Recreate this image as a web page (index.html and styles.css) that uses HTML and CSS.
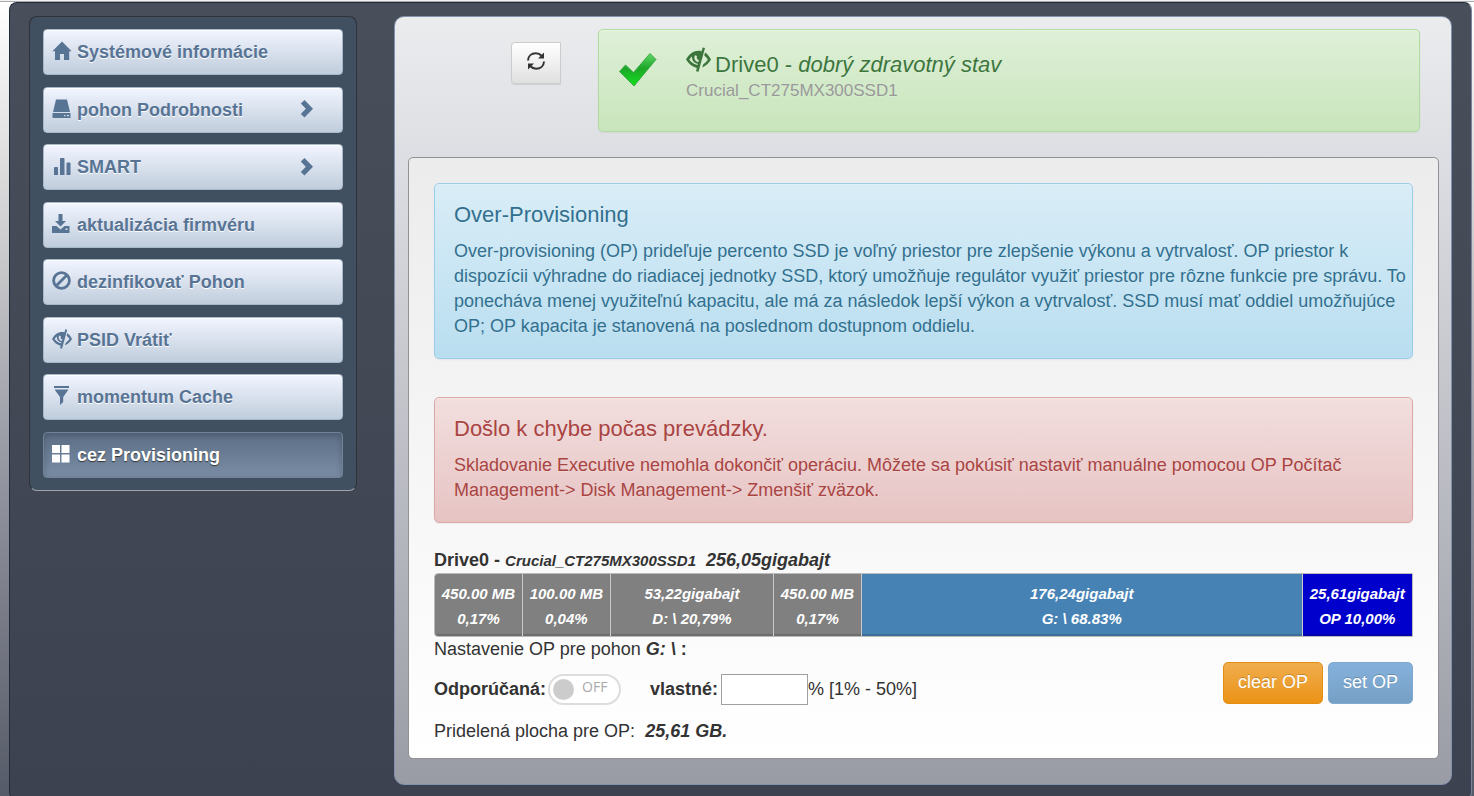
FILE: index.html
```
<!DOCTYPE html>
<html lang="sk">
<head>
    <meta charset="UTF-8">
    <meta name="viewport" content="width=device-width, initial-scale=1.0">
    <title>Over-Provisioning</title>
    <link rel="stylesheet" href="styles.css">
</head>
<body>
    <svg class="sprite" aria-hidden="true">
        <symbol id="eye-close" viewBox="0 0 20 20">
            <path fill-rule="evenodd" d="M0 10C2.500 5.500 6 3 10 3c1 0 1.800.1 2.500.3L13.300.3l1.900.5L10 19.700l-2-.4.700-2.600C5 16 2.200 13.600 0 10zM2.600 10c1.600 2.300 3.800 3.800 6.600 4.300l.3-1C6.500 12.800 4.600 10.800 4.800 7.500 3.900 8.200 3.200 9 2.600 10zM7.300 6.500C5.900 8.600 7 11.500 9.900 12l.4-1.500C8.800 10 8.200 8.600 8.800 7.200z"/>
            <path d="M15.200 4.300c2 1.200 3.600 3.200 4.800 5.700-1.600 2.800-4 5-7 6.300l.8-2.600c1.500-.9 2.700-2.100 3.700-3.700-.7-1.300-1.700-2.400-2.900-3.300z"/>
        </symbol>
    </svg>

    <div class="shell">
        <nav class="sidebar">
            <a href="#" class="nav-btn">
                <svg class="icon" viewBox="0 0 20 20"><path d="M10 .5l9.700 9.800h-2.500V19H12v-6H8v6H3v-8.700H.3z"/></svg>
                <span>Systémové informácie</span>
            </a>
            <a href="#" class="nav-btn">
                <svg class="icon" viewBox="0 0 20 20"><path fill-rule="evenodd" d="M4 .5h11l3 12.500H1zM.5 14h18v5H.5zM12 16v1.300h1.500V16zM15 16v1.300h2V16z"/></svg>
                <span>pohon Podrobnosti</span>
                <svg class="chevron" viewBox="0 0 14 18"><path d="M4.500 0L13 8.800 4.500 17.600.8 14l5-5.200-5-5.200z"/></svg>
            </a>
            <a href="#" class="nav-btn">
                <svg class="icon" viewBox="0 0 20 20"><path d="M2 12q0-1 1-1h2q1 0 1 1v7H2zM8 3q0-1 1-1h2.500q1 0 1 1v16H8zM14.500 7.500q0-1 1-1h2q1 0 1 1V19h-4z"/></svg>
                <span>SMART</span>
                <svg class="chevron" viewBox="0 0 14 18"><path d="M4.500 0L13 8.800 4.500 17.600.8 14l5-5.200-5-5.200z"/></svg>
            </a>
            <a href="#" class="nav-btn">
                <svg class="icon" viewBox="0 0 20 20"><path fill-rule="evenodd" d="M6.500 0h4v7H14l-5.500 5.500L3 7h3.500zM0 12h4.500l4 3.500 4-3.500h5v7H0zM13.500 14.500V16h2v-1.500z"/></svg>
                <span>aktualizácia firmvéru</span>
            </a>
            <a href="#" class="nav-btn">
                <svg class="icon" viewBox="0 0 20 20"><g fill="none" stroke="currentColor" stroke-width="2.800"><circle cx="9.500" cy="9.500" r="7.900"/><path d="M4 15L15 4"/></g></svg>
                <span>dezinfikovať Pohon</span>
            </a>
            <a href="#" class="nav-btn">
                <svg class="icon"><use href="#eye-close"/></svg>
                <span>PSID Vrátiť</span>
            </a>
            <a href="#" class="nav-btn">
                <svg class="icon" viewBox="0 0 20 20"><path d="M2 0h15v2H2zM2.500 3.500h14l-5.300 7.500v5L8 19v-8z"/></svg>
                <span>momentum Cache</span>
            </a>
            <a href="#" class="nav-btn active">
                <svg class="icon" viewBox="0 0 20 20"><path d="M0 1h8v8H0zM9.500 1h8v8h-8zM0 10.500h8v8H0zM9.500 10.500h8v8h-8z"/></svg>
                <span>cez Provisioning</span>
            </a>
        </nav>

        <main class="main">
            <header class="drive-header">
                <button type="button" class="btn-refresh" aria-label="Obnoviť">
                    <svg viewBox="0 0 20 20"><g fill="none" stroke="#333" stroke-width="2"><path d="M2 9.500C2.200 5 5.500 2.300 9.800 2.300c2.500 0 4.500 1 6 2.700"/><path d="M18 10.500c-.2 4.500-3.500 7.200-7.800 7.200-2.500 0-4.500-1-6-2.700"/></g><path fill="#333" d="M18 1.500v6h-6zM2 18.500v-6h6z"/></svg>
                </button>
                <div class="alert alert-success">
                    <svg class="check" viewBox="0 0 40 36">
                        <defs><linearGradient id="tick" x1="0" y1="0" x2="0" y2="1"><stop offset="0" stop-color="#5fd866"/><stop offset=".45" stop-color="#1ea62a"/><stop offset="1" stop-color="#12e01c"/></linearGradient></defs>
                        <path fill="url(#tick)" stroke="#3da845" stroke-width="1" d="M1.500 19.500L7.500 13l8 7.500L32 1.500l6 6L16 34z"/>
                    </svg>
                    <div>
                        <h2 class="drive-title"><svg class="eye"><use href="#eye-close"/></svg> Drive0 - <em>dobrý zdravotný stav</em></h2>
                        <div class="drive-model">Crucial_CT275MX300SSD1</div>
                    </div>
                </div>
            </header>

            <section class="content">
                <div class="alert alert-info">
                    <h3>Over-Provisioning</h3>
                    <p>Over-provisioning (OP) prideľuje percento SSD je voľný priestor pre zlepšenie výkonu a vytrvalosť. OP priestor k dispozícii výhradne do riadiacej jednotky SSD, ktorý umožňuje regulátor využiť priestor pre rôzne funkcie pre správu. To ponecháva menej využiteľnú kapacitu, ale má za následok lepší výkon a vytrvalosť. SSD musí mať oddiel umožňujúce OP; OP kapacita je stanovená na poslednom dostupnom oddielu.</p>
                </div>

                <div class="alert alert-danger">
                    <h3>Došlo k chybe počas prevádzky.</h3>
                    <p>Skladovanie Executive nemohla dokončiť operáciu. Môžete sa pokúsiť nastaviť manuálne pomocou OP Počítač Management-&gt; Disk Management-&gt; Zmenšiť zväzok.</p>
                </div>

                <div class="drive-label">Drive0 - <em><small>Crucial_CT275MX300SSD1</small>&nbsp; 256,05gigabajt</em></div>
                <div class="partitions">
                    <div class="part" style="width: 9%">450.00 MB<br>0,17%</div>
                    <div class="part" style="width: 9%">100.00 MB<br>0,04%</div>
                    <div class="part" style="width: 16.700%">53,22gigabajt<br>D: \ 20,79%</div>
                    <div class="part" style="width: 9%">450.00 MB<br>0,17%</div>
                    <div class="part selected" style="width: 45.100%">176,24gigabajt<br>G: \ 68.83%</div>
                    <div class="part op" style="width: 11.200%">25,61gigabajt<br>OP 10,00%</div>
                </div>
                <div>Nastavenie OP pre pohon <b><em>G: \</em> :</b></div>

                <form class="op-form">
                    <label for="recommended">Odporúčaná:</label>
                    <span class="switch">
                        <input type="checkbox" id="recommended">
                        <span class="switch-text">OFF</span>
                    </span>
                    <label for="custom" class="custom-label">vlastné:</label>
                    <input type="text" id="custom" class="custom-input">
                    <span>% [1% - 50%]</span>
                    <div class="actions">
                        <button type="button" class="btn btn-warning">clear OP</button>
                        <button type="button" class="btn btn-primary" disabled>set OP</button>
                    </div>
                </form>

                <div>Pridelená plocha pre OP:&nbsp; <b><em>25,61 GB.</em></b></div>
            </section>
        </main>
    </div>
</body>
</html>
```
FILE: styles.css
```
* {
    box-sizing: border-box;
}
html {
    background: #f2f2f2;
}
body {
    margin: 1px 0 0;
    padding: 0 2px 0 9px;
    min-height: calc(100vh - 1px);
    overflow: hidden;
    border-top: 1px solid #aaa;
    font-family: "Liberation Sans", Arial, sans-serif;
    font-size: 18px;
    line-height: 25px;
    color: #333;
    background: linear-gradient(#fff, #c8c8ca 260px, #9a9ca6 440px, #7b7e89 600px, #555a68);
}
h2, h3, p {
    margin: 0;
    font-weight: normal;
}
.sprite {
    display: none;
}
.shell {
    display: flex;
    align-items: flex-start;
    gap: 37px;
    padding: 13px 19px 14px 19px;
    border: 1px solid #1f2a3a;
    border-right-color: #7a8599;
    border-radius: 8px;
    background: linear-gradient(#484e5a, #3c424f);
}

/* sidebar */
.sidebar {
    display: flex;
    flex-direction: column;
    justify-content: space-between;
    flex: 0 0 328px;
    min-height: 475px;
    padding: 12px 13px;
    border: 1px solid #2f3338;
    border-bottom-color: #a0a4aa;
    border-radius: 8px;
    background: #415060;
}
.nav-btn {
    display: flex;
    align-items: center;
    height: 46px;
    padding: 1px 28px 0 8px;
    border: 1px solid #a9b8c8;
    border-radius: 4px;
    background: linear-gradient(#f1f5ff, #c0cddc);
    box-shadow: inset 0 1px 0 #fff;
    color: #587495;
    font-weight: bold;
    text-decoration: none;
    text-shadow: 0 1px 0 #fff;
}
.nav-btn.active {
    border-color: #6f8297;
    background: linear-gradient(#5c6e86, #7a8da4);
    box-shadow: inset 0 2px 6px rgba(0,0,0,0.2);
    color: #fff;
    text-shadow: 0 1px 1px #333;
}
.icon {
    width: 20px;
    height: 20px;
    margin: 0 5px 3px 0;
    fill: currentColor;
}
.chevron {
    width: 14px;
    height: 18px;
    margin: 0 0 2px auto;
    fill: currentColor;
}

/* main panel */
.main {
    flex: 1;
    padding: 12px 12px 25px 13px;
    border: 1px solid #8291ad;
    border-radius: 10px;
    background: linear-gradient(#ebecee, #dcdde2 20%, #9a9ca5);
}
.drive-header {
    display: flex;
    align-items: flex-start;
    gap: 37px;
    padding: 0 19px 25px 103px;
}
.btn-refresh {
    width: 50px;
    height: 42px;
    margin-top: 13px;
    padding: 0 0 5px;
    border: 1px solid #ccc;
    border-radius: 4px 0 0 4px;
    background: linear-gradient(#fff, #e0e0e0);
    box-shadow: 0 1px 1px rgba(0,0,0,0.1);
}
.btn-refresh svg {
    width: 20px;
    height: 20px;
    vertical-align: middle;
}
.alert {
    padding: 17px 5px 19px 19px;
    border: 1px solid;
    border-radius: 5px;
    text-shadow: 0 1px 0 rgba(255,255,255,0.2);
    box-shadow: inset 0 1px 0 rgba(255,255,255,0.25), 0 1px 2px rgba(0,0,0,0.05);
}
.alert h3 {
    margin-bottom: 11px;
    font-size: 22px;
    line-height: 27px;
}
.alert-success {
    display: flex;
    flex: 1;
    gap: 28px;
    min-height: 103px;
    border-color: #b2dba1;
    background: linear-gradient(#dff0d8, #c8e5bc);
    color: #3c763d;
}
.check {
    width: 40px;
    height: 36px;
    margin-top: 5px;
}
.drive-title {
    font-size: 22px;
    line-height: 29px;
}
.eye {
    width: 25px;
    height: 25px;
    margin-right: -2px;
    fill: currentColor;
}
.drive-model {
    color: #999;
    font-size: 17px;
    line-height: 24px;
}
.content {
    padding: 25px;
    padding-bottom: 14px;
    border: 1px solid #909296;
    border-radius: 5px;
    background: linear-gradient(#ececec, #fff);
}
.alert-info {
    margin-bottom: 38px;
    border-color: #9acfea;
    background: linear-gradient(#d9edf7, #b9def0);
    color: #31708f;
}
.alert-danger {
    margin-bottom: 25px;
    border-color: #dca7a7;
    background: linear-gradient(#f2dede, #e7c3c3);
    color: #a94442;
}

/* drive partitions */
.drive-label {
    font-weight: bold;
    line-height: 24px;
}
.drive-label small {
    font-size: 15px;
}
.partitions {
    display: flex;
    border: 1px solid #bbb;
    border-radius: 4px 0 0 4px;
    overflow: hidden;
}
.part {
    padding: 7px 0 5px;
    border-right: 1px solid #ccc;
    background: #808080;
    box-shadow: inset 0 -2px 1px rgba(0,0,0,0.15);
    color: #fff;
    font-size: 15px;
    font-style: italic;
    font-weight: bold;
    text-align: center;
    white-space: nowrap;
}
.part.selected {
    background: #4682b4;
}
.part.op {
    border-right: 0;
    background: #0000cd;
}

/* settings */
.op-form {
    display: flex;
    align-items: center;
    min-height: 54px;
    margin-bottom: 3px;
}
.op-form label {
    font-weight: bold;
}
.switch {
    display: flex;
    align-items: center;
    gap: 8px;
    width: 73px;
    height: 31px;
    margin-left: 2px;
    padding-left: 3px;
    border: 2px solid #ddd;
    border-radius: 16px;
    background: #fff;
}
.switch input {
    appearance: none;
    width: 21px;
    height: 21px;
    margin: 0;
    border-radius: 50%;
    background: #ccc;
}
.switch-text {
    padding-bottom: 4px;
    color: #aaa;
    font-family: "Open Sans", sans-serif;
    font-size: 14px;
    line-height: 20px;
}
.op-form .custom-label {
    margin: 0 3px 0 29px;
}
.custom-input {
    width: 87px;
    height: 31px;
    border: 1px solid #a0a0a0;
    font: inherit;
}
.actions {
    display: flex;
    align-self: flex-start;
    gap: 5px;
    margin-left: auto;
}
.btn {
    height: 42px;
    padding: 0 14px 2px;
    border: 1px solid;
    border-radius: 5px;
    color: #fff;
    font: inherit;
    text-shadow: 0 -1px 0 rgba(0,0,0,0.2);
}
.btn-warning {
    border-color: #e38d13;
    background: linear-gradient(#f0ad4e, #eb9316);
}
.btn-primary {
    border-color: #7fa9d0;
    background: linear-gradient(#84b1dc, #769fc4);
}
```
